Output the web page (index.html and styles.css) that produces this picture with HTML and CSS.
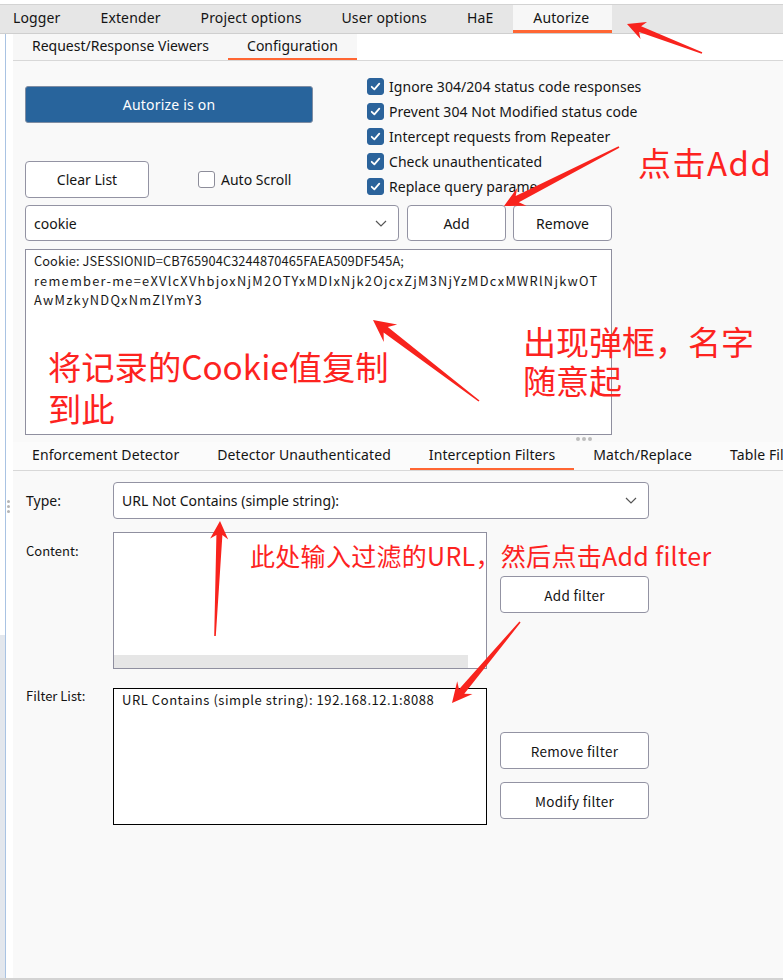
FILE: index.html
```html
<!DOCTYPE html>
<html lang="zh">
<head>
<meta charset="utf-8">
<title>Autorize</title>
<link rel="stylesheet" href="styles.css">
</head>
<body>
<div class="app">
  <nav class="top-tabs">
    <span class="ttab first">Logger</span>
    <span class="ttab">Extender</span>
    <span class="ttab">Project options</span>
    <span class="ttab">User options</span>
    <span class="ttab">HaE</span>
    <span class="ttab active">Autorize</span>
  </nav>
  <div class="main">
    <div class="rail">
      <div class="rail-edge">
        <div class="rail-seg upper"></div>
        <div class="rail-seg lower"></div>
      </div>
      <div class="rail-handle"><i></i><i></i><i></i></div>
    </div>
    <div class="content">
      <div class="sub-tabs">
        <span class="stab">Request/Response Viewers</span>
        <span class="stab active">Configuration</span>
      </div>
      <section class="config">
        <div class="config-top">
          <div class="left-col">
            <button class="btn-primary">Autorize is on</button>
            <div class="clear-row">
              <button class="btn btn-clear">Clear List</button>
              <label class="cb"><span class="box"></span>Auto Scroll</label>
            </div>
          </div>
          <ul class="checks">
            <li><span class="box checked"><svg viewBox="0 0 17 17"><path d="M4.2 8.8 L7.2 11.8 L12.8 5.2"/></svg></span>Ignore 304/204 status code responses</li>
            <li><span class="box checked"><svg viewBox="0 0 17 17"><path d="M4.2 8.8 L7.2 11.8 L12.8 5.2"/></svg></span>Prevent 304 Not Modified status code</li>
            <li><span class="box checked"><svg viewBox="0 0 17 17"><path d="M4.2 8.8 L7.2 11.8 L12.8 5.2"/></svg></span>Intercept requests from Repeater</li>
            <li><span class="box checked"><svg viewBox="0 0 17 17"><path d="M4.2 8.8 L7.2 11.8 L12.8 5.2"/></svg></span>Check unauthenticated</li>
            <li><span class="box checked"><svg viewBox="0 0 17 17"><path d="M4.2 8.8 L7.2 11.8 L12.8 5.2"/></svg></span>Replace query parame</li>
          </ul>
        </div>
        <div class="header-row">
          <div class="combo combo-header"><span>cookie</span><svg class="chev" viewBox="0 0 12 7"><path d="M1 1 L6 6 L11 1"/></svg></div>
          <button class="btn btn-small">Add</button>
          <button class="btn btn-small">Remove</button>
        </div>
        <div class="textarea cookie-text"><span class="cl cl-digits">Cookie: JSESSIONID=CB765904C3244870465FAEA509DF545A;</span><span class="cl cl-letters">remember-me=eXVlcXVhbjoxNjM2OTYxMDIxNjk2OjcxZjM3NjYzMDcxMWRlNjkwOT</span><span class="cl cl-letters">AwMzkyNDQxNmZlYmY3</span></div>
        <div class="splitter"><i></i><i></i><i></i></div>
      </section>
      <div class="lower-tabs">
        <span class="stab">Enforcement Detector</span>
        <span class="stab">Detector Unauthenticated</span>
        <span class="stab active">Interception Filters</span>
        <span class="stab">Match/Replace</span>
        <span class="stab">Table Filter</span>
      </div>
      <section class="filters">
        <div class="frow type-row">
          <span class="flabel type-label">Type:</span>
          <div class="combo combo-type"><span>URL Not Contains (simple string):</span><svg class="chev" viewBox="0 0 12 7"><path d="M1 1 L6 6 L11 1"/></svg></div>
        </div>
        <div class="frow content-row">
          <span class="flabel cjk-label content-label">Content:</span>
          <div class="content-box"><div class="hscroll"></div></div>
          <div class="fbtns add-btns">
            <button class="btn btn-filter">Add filter</button>
          </div>
        </div>
        <div class="frow list-row">
          <span class="flabel cjk-label list-label">Filter List:</span>
          <div class="list-box">URL Contains (simple string): 192.168.12.1:8088</div>
          <div class="fbtns list-btns">
            <button class="btn btn-filter">Remove filter</button>
            <button class="btn btn-filter">Modify filter</button>
          </div>
        </div>
      </section>
    </div>
  </div>

  <svg class="arrows" viewBox="0 0 783 980" width="783" height="980">
    <polygon points="702.3,52.3 641.1,26.3 647,22.1 627,24 640.5,38.9 639,31.9 701.7,53.7"/>
    <polygon points="618.6,146.3 515.7,196.1 517.2,188 504,206 526.4,205.8 518.9,202.3 619.4,147.7"/>
    <polygon points="479.5,400.4 387.8,326.9 397.2,324.6 373,320 383.8,342.1 383.6,332.5 478.5,401.6"/>
    <polygon points="215.8,636 222.4,535.1 228.2,539.4 220,521 210.2,538.6 216.4,534.9 214.2,636"/>
    <polygon points="519.4,621.5 459,689.3 457.2,681.3 452,703 472.5,694.1 464.3,693.8 520.6,622.5"/>
  </svg>
  <div class="note note-add">点击Add</div>
  <div class="note note-popup">出现弹框，名字<br>随意起</div>
  <div class="note note-cookie">将记录的Cookie值复制<br>到此</div>
  <div class="note note-filter">此处输入过滤的URL，然后点击Add filter</div>
</div>
</body>
</html>
```
FILE: styles.css
```css
* { box-sizing: border-box; }

body {
  margin: 0;
  background: #fff;
  font-family: "Noto Sans", "Open Sans", sans-serif;
  font-size: 14px;
  color: #141414;
}

.app {
  position: relative;
  width: 783px;
  height: 980px;
  overflow: hidden;
  display: flex;
  flex-direction: column;
  border-bottom: 2px solid #d3d3d3;
}

/* top tabs */
.top-tabs {
  margin-top: 4px;
  height: 30px;
  flex: none;
  display: flex;
  background: #e6e6e6;
  border-top: 1px solid #d3d3d3;
  border-bottom: 1px solid #cfcfcf;
  letter-spacing: 0.13px;
}
.ttab {
  display: flex;
  align-items: center;
  padding: 0 20px 3px;
  white-space: nowrap;
}
.ttab.first { padding-left: 13px; }
.ttab.active {
  background: #f7f7f7;
  padding-right: 23px;
  box-shadow: inset 0 -3px 0 #ff6633;
}

.main {
  flex: 1;
  display: flex;
  min-height: 0;
}

/* left rail */
.rail {
  width: 13px;
  flex: none;
  display: flex;
}
.rail-edge {
  width: 6px;
  display: flex;
  flex-direction: column;
}
.rail-seg { border-right: 1px solid #a9c3e3; }
.rail-seg.upper { height: 601px; }
.rail-seg.lower { flex: 1; background: #e3e7ed; }
.rail-handle {
  width: 7px;
  padding-top: 466px;
  padding-left: 1px;
  display: flex;
  flex-direction: column;
  gap: 2px;
}
.rail-handle i {
  display: block;
  width: 3px;
  height: 3px;
  border-radius: 50%;
  background: #b4b4b4;
}

.content {
  flex: 1;
  display: flex;
  flex-direction: column;
  min-width: 0;
}

/* sub tabs */
.sub-tabs, .lower-tabs {
  display: flex;
  flex: none;
  background: #fff;
  border-bottom: 1px solid #d8d8d8;
  white-space: nowrap;
  overflow: hidden;
}
.sub-tabs { height: 27px; }
.lower-tabs { height: 29px; background: #fbfbfb; letter-spacing: 0.1px; }
.stab {
  display: flex;
  align-items: center;
  padding: 0 19px 4px;
  background: #f7f7f7;
}
.lower-tabs .stab { background: #fbfbfb; padding-bottom: 3px; }
.stab.active { box-shadow: inset 0 -2px 0 #ff6633; }

/* config */
.config {
  flex: none;
  background: #f9f9f9;
  padding: 13px 0 0 12px;
}
.config-top {
  display: flex;
  align-items: flex-start;
  gap: 54px;
}
.left-col {
  width: 288px;
  padding-top: 12px;
}
.btn-primary {
  display: block;
  width: 288px;
  height: 37px;
  border: 1px solid #7f8da3;
  border-radius: 3px;
  background: #28649c;
  color: #fff;
  font: inherit;
  letter-spacing: 0.2px;
}
.clear-row {
  margin-top: 38px;
  display: flex;
  align-items: center;
  gap: 49px;
}
.btn {
  font: inherit;
  color: #141414;
  background: #fff;
  border: 1px solid #9393a3;
  border-radius: 4px;
  padding: 0;
  height: 37px;
}
.btn-clear { width: 124px; }
.cb {
  display: flex;
  align-items: center;
  gap: 6px;
}
.box {
  width: 17px;
  height: 17px;
  flex: none;
  border: 1px solid #8d8d9a;
  border-radius: 3px;
  background: #fff;
  display: flex;
}
.box.checked {
  background: #2b639b;
  border-color: #2b639b;
}
.box svg { width: 15px; height: 15px; }
.box path {
  fill: none;
  stroke: #fff;
  stroke-width: 2;
  stroke-linecap: round;
  stroke-linejoin: round;
}
.checks {
  list-style: none;
  margin: 0;
  padding: 0;
  letter-spacing: 0.05px;
}
.checks li {
  height: 25px;
  display: flex;
  align-items: center;
  gap: 5px;
  white-space: nowrap;
}

.header-row {
  margin-top: 6px;
  display: flex;
  align-items: center;
}
.combo {
  height: 36px;
  background: #fff;
  border: 1px solid #9393a3;
  border-radius: 4px;
  display: flex;
  align-items: center;
  justify-content: space-between;
  padding: 0 11px 0 8px;
}
.combo-header { width: 374px; margin-right: 8px; }
.chev { width: 12px; height: 7px; }
.chev path { fill: none; stroke: #555; stroke-width: 1.2; }
.btn-small { width: 99px; height: 36px; }
.btn-small + .btn-small { margin-left: 7px; }

.textarea {
  margin-top: 8px;
  width: 587px;
  height: 186px;
  background: #fff;
  border: 1px solid #8f8f9f;
  padding: 1px 8px;
}
.cookie-text {
  font-family: "Noto Sans CJK SC", "Noto Sans", sans-serif;
  font-size: 12.8px;
  line-height: 19.5px;
  white-space: pre;
  color: #1a1a1a;
}
.cl { display: block; }
.cl-digits { letter-spacing: 0.1px; }
.cl-letters { letter-spacing: 1.27px; }

.splitter {
  height: 7px;
  display: flex;
  align-items: center;
  gap: 2px;
  padding-left: 551px;
}
.splitter i {
  width: 4px;
  height: 4px;
  border-radius: 50%;
  background: #bdbdbd;
}

/* filters */
.filters {
  flex: 1;
  background: #f9f9f9;
  padding: 11px 0 0 13px;
}
.frow { display: flex; align-items: flex-start; }
.flabel { width: 87px; flex: none; }
.type-label { align-self: center; }
.cjk-label {
  font-family: "Noto Sans CJK SC", "Noto Sans", sans-serif;
  font-size: 13px;
}
.combo-type { width: 536px; height: 37px; }
.content-row { margin-top: 13px; }
.content-label { margin-top: 9px; }
.content-box {
  width: 374px;
  height: 137px;
  background: #fff;
  border: 1px solid #8f8f9f;
  display: flex;
  align-items: flex-end;
  padding: 0 18px 0 0;
}
.hscroll {
  width: 100%;
  height: 13px;
  background: #e6e6e6;
}
.fbtns {
  margin-left: 13px;
  display: flex;
  flex-direction: column;
  gap: 13px;
  padding-top: 44px;
}
.btn-filter {
  width: 149px;
  height: 37px;
  font-family: "Noto Sans CJK SC", "Noto Sans", sans-serif;
  font-size: 13.5px;
  letter-spacing: 0.3px;
}
.list-row { margin-top: 19px; }
.list-label { margin-top: -2px; }
.list-box {
  width: 374px;
  height: 137px;
  background: #fff;
  border: 1px solid #000;
  padding: 1px 8px;
  font-family: "Noto Sans CJK SC", "Noto Sans", sans-serif;
  font-size: 13px;
  line-height: 20px;
  letter-spacing: 0.56px;
  white-space: nowrap;
}

/* annotations */
.arrows {
  position: absolute;
  left: 0;
  top: 0;
  pointer-events: none;
}
.arrows polygon { fill: #f8231d; }
.note {
  position: absolute;
  color: #fd231f;
  font-family: "Noto Sans CJK SC", "Noto Sans", sans-serif;
  white-space: nowrap;
  pointer-events: none;
}
.note-add { left: 638px; top: 142px; font-size: 33px; line-height: 40px; letter-spacing: 1.5px; }
.note-popup { left: 523px; top: 322px; font-size: 33px; line-height: 39px; }
.note-cookie { left: 48px; top: 345px; font-size: 33.3px; line-height: 42px; }
.note-filter { left: 250px; top: 539px; font-size: 25px; line-height: 32px; letter-spacing: 0.3px; }
```
